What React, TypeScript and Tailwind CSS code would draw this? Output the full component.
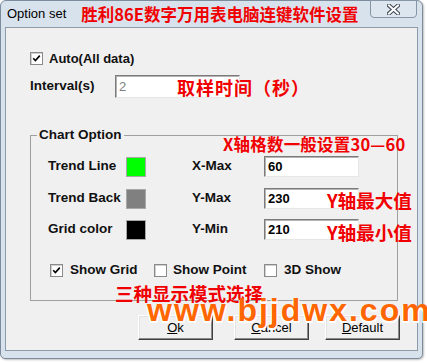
import React from "react";

const CJK = "font-['Noto_Sans_CJK_SC',sans-serif]";

function Check({ checked }: { checked?: boolean }) {
  return (
    <span className="w-[13px] h-[13px] shrink-0 bg-white border border-[#8a8a8a] shadow-[inset_1px_1px_0_#d0d0d0] flex items-center justify-center">
      {checked && (
        <svg width="9" height="9" viewBox="0 0 9 9">
          <path d="M1.2 4.2 L3.4 6.6 L7.8 1.6" fill="none" stroke="#000" strokeWidth="1.6" />
        </svg>
      )}
    </span>
  );
}

function Field({ value, w, h, gray }: { value: string; w: string; h: string; gray?: boolean }) {
  return (
    <div
      className={`${w} ${h} bg-white border border-t-[#7b7b7b] border-l-[#7b7b7b] border-b-[#e6e6e6] border-r-[#e6e6e6] shadow-[inset_1px_1px_0_#b4b4b4] flex items-center pl-[3px] text-[13px] ${
        gray ? "text-[#808080]" : "text-black font-bold"
      }`}
    >
      {value}
    </div>
  );
}

function Btn({ first, rest, ml }: { first: string; rest: string; ml: string }) {
  return (
    <div
      className={`${ml} w-[75px] h-[25px] bg-[#f0f0f0] border border-t-white border-l-white border-b-[#404040] border-r-[#404040] shadow-[inset_-1px_-1px_0_#8a8a8a,inset_1px_1px_0_#e3e3e3] flex items-center justify-center text-[13px] text-black`}
    >
      <span>
        <span className="underline">{first}</span>
        {rest}
      </span>
    </div>
  );
}

function Row({
  label,
  color,
  xl,
  val,
  mt,
}: {
  label: string;
  color: string;
  xl: string;
  val: string;
  mt: string;
}) {
  return (
    <div className={`${mt} flex items-center h-[21px]`}>
      <span className="w-[78px] text-[13.5px] font-bold">{label}</span>
      <span className={`w-[20px] h-[20px] border border-[#a8a8a8] ${color}`} />
      <span className="ml-[46px] w-[72px] text-[13.5px] font-bold">{xl}</span>
      <Field value={val} w="w-[95px]" h="h-[21px]" />
    </div>
  );
}

export default function App() {
  return (
    <div className="relative w-[427px] h-[363px] bg-white overflow-hidden font-['Liberation_Sans',sans-serif] text-[#111]">
      <div className="w-[423px] h-[359px] bg-[#d8e2ec] border border-[#7d8c9c] rounded-t-[6px] rounded-b-[5px] flex flex-col shadow-[1px_1px_2px_rgba(0,0,0,0.25)]">
        {/* title bar */}
        <div className="relative h-[26px] flex items-center pl-[6px]">
          <span className="text-[13px] text-black">Option set</span>
          <span className={`ml-[15px] text-[16.5px] font-bold text-[#f00000] leading-none ${CJK}`}>
            胜利86E数字万用表电脑连键软件设置
          </span>
          <div className="absolute right-[5px] top-[-1px] w-[47px] h-[18px] rounded-b-[4px] border border-[#8796a7] bg-[#dde5ee] flex items-center justify-center">
            <svg width="13" height="11" viewBox="0 0 13 11">
              <path d="M2 1.5 L11 9.5 M11 1.5 L2 9.5" stroke="#3b4452" strokeWidth="4" strokeLinecap="square" />
              <path d="M2 1.5 L11 9.5 M11 1.5 L2 9.5" stroke="#ffffff" strokeWidth="2" strokeLinecap="square" />
            </svg>
          </div>
        </div>
        {/* client area */}
        <div className="mx-[4px] h-[324px] bg-[#f0f0f0] border border-[#8d9aa8] pl-[24px] pt-[24px] flex flex-col">
          <div className="flex items-center h-[13px]">
            <Check checked />
            <span className="ml-[6px] text-[13px] font-bold">Auto(All data)</span>
          </div>
          <div className="mt-[10px] flex items-center h-[23px]">
            <span className="w-[85px] text-[13.5px] font-bold">Interval(s)</span>
            <Field value="2" w="w-[125px]" h="h-[23px]" gray />
          </div>
          {/* group */}
          <div className="relative mt-[37px] w-[368px] h-[166px] border border-[#a0a0a0] pl-[17px] pt-[20px] flex flex-col">
            <span className="absolute left-[6px] top-[-9px] bg-[#f0f0f0] px-[2px] text-[13.5px] font-bold leading-[16px]">
              Chart Option
            </span>
            <Row label="Trend Line" color="bg-[#00ff00]" xl="X-Max" val="60" mt="mt-0" />
            <Row label="Trend Back" color="bg-[#808080]" xl="Y-Max" val="230" mt="mt-[11px]" />
            <Row label="Grid color" color="bg-black" xl="Y-Min" val="210" mt="mt-[10px]" />
            <div className="mt-[24px] flex items-center h-[13px] ml-[2px]">
              <Check checked />
              <span className="ml-[7px] w-[84px] text-[13.5px] font-bold">Show Grid</span>
              <Check />
              <span className="ml-[6px] w-[91px] text-[13.5px] font-bold">Show Point</span>
              <Check />
              <span className="ml-[7px] text-[13.5px] font-bold">3D Show</span>
            </div>
          </div>
          <div className="mt-[14px] flex items-center">
            <Btn first="O" rest="k" ml="ml-[108px]" />
            <Btn first="C" rest="ancel" ml="ml-[21px]" />
            <Btn first="D" rest="efault" ml="ml-[16px]" />
          </div>
        </div>
      </div>

      {/* red annotations overlaying the dialog */}
      <span className={`absolute left-[177px] top-[76px] text-[18px] tracking-[1px] font-bold text-[#f00000] leading-[22px] ${CJK}`}>
        取样时间（秒）
      </span>
      <span className={`absolute left-[223px] top-[134px] text-[16.5px] tracking-[0.2px] font-bold text-[#f00000] leading-[20px] ${CJK}`}>
        X轴格数一般设置30—60
      </span>
      <span className={`absolute left-[327px] top-[188px] text-[18.5px] font-bold text-[#f00000] leading-[24px] ${CJK}`}>
        Y轴最大值
      </span>
      <span className={`absolute left-[327px] top-[220px] text-[18.5px] font-bold text-[#f00000] leading-[24px] ${CJK}`}>
        Y轴最小值
      </span>
      <span className={`absolute left-[115px] top-[281px] text-[18.5px] font-bold text-[#f00000] leading-[24px] ${CJK}`}>
        三种显示模式选择
      </span>
      <span className="absolute left-[147px] top-[292px] text-[32px] font-bold text-[#ff6600] leading-[36px] tracking-[2px] [text-shadow:1px_2px_0_#fff,-1px_2px_0_#fff]">
        www.bjjdwx.com
      </span>
    </div>
  );
}
